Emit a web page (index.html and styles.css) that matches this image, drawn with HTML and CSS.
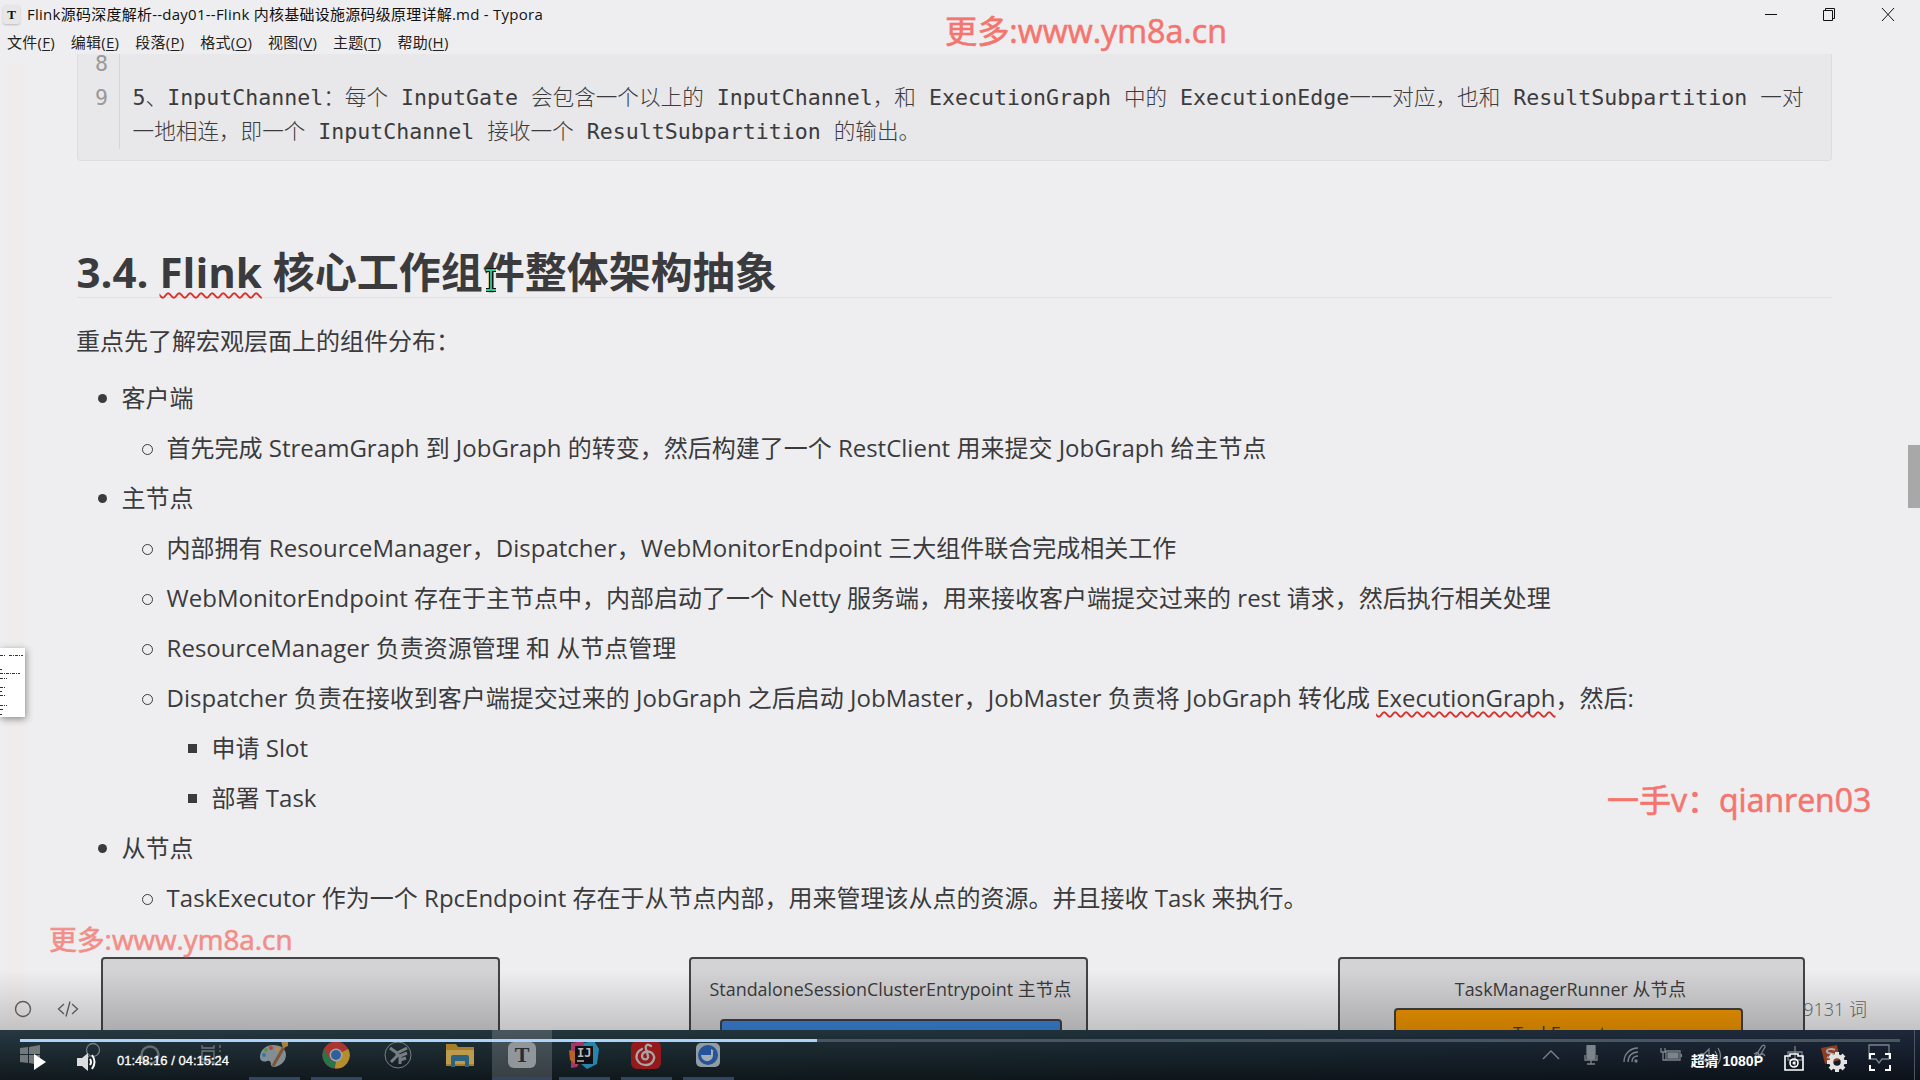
FILE: index.html
```
<!DOCTYPE html>
<html lang="zh-CN">
<head>
    <meta charset="UTF-8">
    <title>Flink源码深度解析--day01--Flink 内核基础设施源码级原理详解.md - Typora</title>
    <link rel="stylesheet" href="styles.css">
</head>
<body>
<div class="wrap">
    <!-- 标题栏 -->
    <div class="title-bar">
        <span class="logo">T</span>
        <span class="title">Flink源码深度解析--day01--Flink 内核基础设施源码级原理详解.md - Typora</span>
        <div class="win-btns">
            <svg width="12" height="16" viewBox="0 0 12 16"><path d="M0 8.5h12"/></svg>
            <svg width="14" height="16" viewBox="0 0 14 16"><path d="M1.5 4.5h9v10h-9zM3.5 4.5v-2h9v10h-2"/></svg>
            <svg width="14" height="16" viewBox="0 0 14 16"><path d="M1 2l12 13M13 2L1 15"/></svg>
        </div>
    </div>
    <ul class="menu">
        <li>文件(<u>F</u>)</li>
        <li>编辑(<u>E</u>)</li>
        <li>段落(<u>P</u>)</li>
        <li>格式(<u>O</u>)</li>
        <li>视图(<u>V</u>)</li>
        <li>主题(<u>T</u>)</li>
        <li>帮助(<u>H</u>)</li>
    </ul>

    <!-- 正文 -->
    <div class="content">
        <div class="code">
            <div class="line"><span class="num">8</span><p></p></div>
            <div class="line"><span class="num">9</span><p>5、InputChannel：每个 InputGate 会包含一个以上的 InputChannel，和 ExecutionGraph 中的 ExecutionEdge一一对应，也和 ResultSubpartition 一对<br>一地相连，即一个 InputChannel 接收一个 ResultSubpartition 的输出。</p></div>
        </div>
        <h2>3.4. <span class="err">Flink</span> 核心工作组件整体架构抽象</h2>
        <p class="intro">重点先了解宏观层面上的组件分布：</p>
        <ul class="list">
            <li>客户端
                <ul>
                    <li>首先完成 StreamGraph 到 JobGraph 的转变，然后构建了一个 RestClient 用来提交 JobGraph 给主节点</li>
                </ul>
            </li>
            <li>主节点
                <ul>
                    <li>内部拥有 ResourceManager，Dispatcher，WebMonitorEndpoint 三大组件联合完成相关工作</li>
                    <li>WebMonitorEndpoint 存在于主节点中，内部启动了一个 Netty 服务端，用来接收客户端提交过来的 rest 请求，然后执行相关处理</li>
                    <li>ResourceManager 负责资源管理 和 从节点管理</li>
                    <li>Dispatcher 负责在接收到客户端提交过来的 JobGraph 之后启动 JobMaster，JobMaster 负责将 JobGraph 转化成 <span class="err">ExecutionGraph</span>，然后:
                        <ul>
                            <li>申请 Slot</li>
                            <li>部署 Task</li>
                        </ul>
                    </li>
                </ul>
            </li>
            <li>从节点
                <ul>
                    <li>TaskExecutor 作为一个 RpcEndpoint 存在于从节点内部，用来管理该从点的资源。并且接收 Task 来执行。</li>
                </ul>
            </li>
        </ul>
        <div class="chart">
            <div class="box client"></div>
            <div class="box master"><span>StandaloneSessionClusterEntrypoint 主节点</span><div class="inner blue"></div></div>
            <div class="box worker"><span>TaskManagerRunner 从节点</span><div class="inner orange">TaskExecutor</div></div>
        </div>
    </div>

    <div class="scroll-thumb"></div>
    <div class="side-thumb">
        <svg width="25" height="69" viewBox="0 0 25 69"><path d="M0 7.5h5M9 7.5h14M0 21.5h2M0 25.5h20M0 30.5h7M0 39.5h5M0 43.5h2M0 47.5h5M0 57.5h7M0 61.5h3M0 66.5h2"/></svg>
    </div>
    <svg class="cursor" width="16" height="26" viewBox="0 0 16 26"><path class="edge" d="M3 3h4l1 1 1-1h4M8 4v18M3 23h4l1-1 1 1h4"/><path class="core" d="M3 3h4l1 1 1-1h4M8 4v18M3 23h4l1-1 1 1h4"/></svg>

    <!-- 底部状态 -->
    <div class="status">
        <svg width="18" height="18" viewBox="0 0 18 18"><circle cx="9" cy="9" r="7.5"/></svg>
        <svg width="22" height="18" viewBox="0 0 22 18"><path d="M7 4L1.5 9 7 14M15 4l5.500 5-5.500 5M13 1.500L9 16.500"/></svg>
        <span>9131 词</span>
    </div>

    <div class="mark mark-top">更多:www.ym8a.cn</div>
    <div class="mark mark-right">一手v：qianren03</div>
    <div class="mark mark-left">更多:www.ym8a.cn</div>

    <div class="shade"></div>

    <!-- 任务栏 -->
    <div class="taskbar">
        <div class="apps">
            <div class="app start"><svg width="20" height="20" viewBox="0 0 20 20"><path fill="#74797c" d="M0 3l8-1v7H0zM9 2l11-2v9H9zM0 10h8v8l-8-1zM9 10h11v10L9 18z"/></svg></div>
            <div class="app"><svg width="26" height="26" viewBox="0 0 26 26" fill="none" stroke="#777e82" stroke-width="1.300"><circle cx="18" cy="8" r="6.500"/><path d="M14 14l-7 9"/></svg></div>
            <div class="app"><svg width="22" height="22" viewBox="0 0 22 22"><circle cx="11" cy="11" r="8.500" fill="none" stroke="#626b70" stroke-width="2.500"/></svg></div>
            <div class="app"><svg width="22" height="22" viewBox="0 0 22 22" fill="none" stroke="#70777b" stroke-width="1.300"><path d="M1 1v3h12V1M1 7h12v8H1zM1 21v-3h12v3M19 1v3M19 6v2M19 11v10"/></svg></div>
            <div class="app open"><svg width="30" height="28" viewBox="0 0 30 28"><path fill="#818e96" d="M14 4C6 4 1 10 1 16c0 5 5 5 7 4 3-1 4 1 4 4 1 5 15 0 15-10 0-6-5-10-13-10z"/><circle cx="5" cy="14" r="2" fill="#347a9f"/><circle cx="7" cy="9" r="2" fill="#61943d"/><circle cx="12" cy="7" r="2" fill="#b84437"/><circle cx="18" cy="8" r="2" fill="#bd8c34"/><path d="M26 4L14 25" stroke="#84532f" stroke-width="3"/><path d="M22 0h7v5l-5 2z" fill="#a68047"/></svg></div>
            <div class="app open"><svg width="28" height="28" viewBox="0 0 28 28"><circle cx="14" cy="14" r="13.500" fill="#a93730"/><path fill="#b58d2c" d="M14 14l12.300-6A13.500 13.500 0 0 1 13 27.500z"/><path fill="#29744a" d="M2 8l6 10 6 3-2 6.500A13.500 13.500 0 0 1 2 8z"/><circle cx="14" cy="14" r="6.500" fill="#a2a9ad"/><circle cx="14" cy="14" r="5" fill="#315f9c"/></svg></div>
            <div class="app"><svg width="28" height="28" viewBox="0 0 28 28" fill="none" stroke="#777d80"><circle cx="14" cy="14" r="13"/><path stroke-width="3" d="M6 7l7 5 10-5M13 12v3l-6 6M16 13v10M16 15l7-3M16 19l6-2"/></svg></div>
            <div class="app"><svg width="28" height="24" viewBox="0 0 28 24"><path fill="#a77d28" d="M0 1h10l2 3h16v19H0z"/><path fill="#bd9b4c" d="M0 7h28v14H0z"/><path fill="#2d6380" d="M5 14q0-2 2-2h14q2 0 2 2v10h-4v-6H9v6H5z"/></svg></div>
            <div class="app open active"><span class="ty">T</span></div>
            <div class="app open"><svg width="30" height="28" viewBox="0 0 30 28"><path fill="#a53668" d="M2 2l12-2 4 8-10 18-6 1z"/><path fill="#b66425" d="M0 9l8 2v13l-7-5z"/><path fill="#2685ab" d="M15 2l10-2 5 8-2 15-10 5-7-6z"/><path fill="#100f13" d="M6 5h18v18H6z"/><path stroke="#b5b5b5" stroke-width="1.500" d="M8 20h7"/></svg><b class="ij">IJ</b></div>
            <div class="app open"><svg width="30" height="28" viewBox="0 0 30 28"><rect width="30" height="28" rx="6" fill="#95191b"/><path fill="none" stroke="#aaa3a3" stroke-width="2.300" stroke-linecap="round" d="M20 5c-4-3-6 0-5 3l2 7c1 4-6 5-6 0 0-4 6-6 10-3 5 5 0 12-6 12-7 0-11-6-9-11 1-3 3-4 5-5"/></svg></div>
            <div class="app open"><svg width="24" height="24" viewBox="0 0 24 24"><rect width="24" height="24" rx="5" fill="#929da3"/><circle cx="12" cy="12" r="10" fill="#245398"/><path fill="#a4adb5" d="M5 12h10V6l3 2h-1v5c-1 7-11 7-12-1z"/></svg></div>
        </div>
        <div class="tray">
            <svg width="18" height="12" viewBox="0 0 18 12"><path d="M1 10l8-8 8 8"/></svg>
            <svg width="14" height="20" viewBox="0 0 14 20"><rect x="3" y="0" width="8" height="14" rx="1" fill="#7b838b"/><path d="M1 10v5h12v-5M7 15v4M3 19h8"/></svg>
            <svg width="18" height="18" viewBox="0 0 18 18"><path d="M2 16C2 8 8 2 16 2M6 16c0-6 4-10 10-10M10 16c0-4 2-6 6-6"/><circle cx="14" cy="15" r="1"/></svg>
            <svg width="22" height="16" viewBox="0 0 22 16"><path d="M1 1v4h4V1M3 5v8h3M6 4h14v9H6zM21.500 7v3"/><path fill="#7b838b" d="M8 6h10v5H8z"/></svg>
        </div>
        <svg class="tray-vol" width="22" height="20" viewBox="0 0 22 20"><path d="M1 8v6h3l5 4V3L4 8zM12 8q2 3 0 6M15 5q4 6 0 11M18 2q5 8 0 16"/></svg>
        <svg class="tray-pen" width="16" height="20" viewBox="0 0 16 20"><path d="M2 14L10 2q3-2 3 1L6 15M2 10q6-4 4 2 5-4 7 0"/></svg>
        <svg class="tray-ime" width="18" height="22" viewBox="0 0 18 22"><path d="M9 0v21M2 6h14v8H2z"/></svg>
        <svg class="tray-sogou" width="20" height="19" viewBox="0 0 20 19"><path fill="#8e3c22" d="M0 3l16-3 3 15-15 4z"/><path fill="none" stroke="#aaa" stroke-width="2" d="M14 5c-3-2-9-1-8 2 1 2 8 1 8 4 0 2-5 3-8 1"/></svg>
        <svg class="tray-note" width="22" height="20" viewBox="0 0 22 20"><path d="M1 1h20v14h-7l-3 4-3-4H1z"/></svg>
        <i class="edge-line"></i>

        <!-- 播放器控制条 -->
        <div class="progress"><div class="played"></div></div>
        <div class="player">
            <svg class="play" width="12" height="16" viewBox="0 0 12 16"><path d="M0 0l12 8-12 8z"/></svg>
            <svg class="vol" width="20" height="18" viewBox="0 0 20 18"><path d="M0 5h5l6-5v18l-6-5H0z"/><path class="wave" d="M13 6q2 3 0 6M15 2q5 7 0 14"/></svg>
            <span class="time">01:48:16 / 04:15:24</span>
            <span class="quality">超清 1080P</span>
            <svg class="shot" width="20" height="18" viewBox="0 0 20 18"><path d="M6 3V1h8v2h5v14H1V3z"/><circle cx="10" cy="10" r="4"/><circle class="dot" cx="10" cy="10" r="1.500"/></svg>
            <svg class="gear" width="20" height="20" viewBox="0 0 20 20"><circle cx="10" cy="10" r="5.700"/><path d="M10 0v4M10 16v4M0 10h4M16 10h4M3 3l3 3M14 14l3 3M17 3l-3 3M6 14l-3 3"/></svg>
            <svg class="full" width="22" height="18" viewBox="0 0 22 18"><path d="M1 6V1h5M16 1h5v5M21 12v5h-5M6 17H1v-5"/></svg>
        </div>
    </div>
</div>
</body>
</html>
```
FILE: styles.css
```
body, h2, p, ul {
    margin: 0;
    padding: 0
}

body {
    font: 24px/38px "Open Sans", "Noto Sans CJK SC", sans-serif;
    color: #3b3b3d;
    background: #eeeef0;
    overflow: hidden;
}

ul {
    list-style: none
}

.wrap {
    width: 1920px;
    height: 1080px;
    position: relative;
    overflow: hidden;
    background: linear-gradient(#efedeb, #efedeb) 7px 64px / 17px 100% no-repeat;
}

/* 标题栏 */
.title-bar {
    display: flex;
    align-items: center;
    height: 29px;
    font: 15px/29px "Open Sans", "Noto Sans CJK SC", sans-serif;
    color: #111;
}

.logo {
    width: 17px;
    height: 19px;
    margin: 0 7px 0 3px;
    border-radius: 3px;
    background: #e7e7e8;
    box-shadow: 0 1px 2px #bbb;
    font: bold 13px/19px "Liberation Serif", serif;
    text-align: center;
}

.title {
    margin-top: -1px;
    letter-spacing: 0.25px;
}

.win-btns {
    display: flex;
    gap: 45px;
    margin: -2px 25px 0 auto;
}

.win-btns svg {
    fill: none;
    stroke: #111;
}

.menu {
    display: flex;
    gap: 16px;
    height: 25px;
    padding-left: 7px;
    font: 15px/26px "Open Sans", "Noto Sans CJK SC", sans-serif;
    color: #222;
}

.menu li {
    white-space: nowrap;
    letter-spacing: 0.24px;
}

.menu u {
    text-underline-offset: 2px;
}

/* 正文 */
.content {
    margin: 0 88px 0 77px;
}

.code {
    height: 107px;
    border: 1px solid #dcdddf;
    border-top: 0;
    border-radius: 0 0 4px 4px;
    background: #e8e7e9;
    font: 21.6px/34px "DejaVu Sans Mono", "Noto Sans CJK SC", monospace;
    box-sizing: border-box;
}

.line {
    display: flex;
    height: 34px;
}

/* 第一行只露出下半部分，行高收短 */
.line:first-child {
    height: 27px;
    line-height: 20px;
}

.line + .line {
    height: 68px;
}

.line p {
    border-left: 1px solid #d5d5d7;
    padding-left: 12.6px;
    white-space: nowrap;
    font-weight: 300;
}

.num {
    width: 30px;
    padding-right: 11px;
    text-align: right;
    color: #999;
}

h2 {
    height: 53px;
    margin-top: 83px;
    border-bottom: 1px solid #e0e0e2;
    font-size: 42px;
    line-height: 55px;
    text-indent: -0.4px;
}

.err {
    text-decoration: underline wavy #d8322c 1.5px;
    text-underline-offset: 4px;
    text-decoration-skip-ink: none;
}

.intro {
    margin-top: 24px;
    text-indent: -1px;
}

.list {
    margin-top: 13px;
    line-height: 50px;
    white-space: nowrap;
}

.list li {
    position: relative;
    padding-left: 45px;
    text-indent: -0.4px;
}

.list li::before {
    content: "";
    position: absolute;
    left: 21px;
    top: 21px;
    width: 9px;
    height: 9px;
    border-radius: 50%;
    background: #3b3b3d;
}

.list li li::before {
    left: 20px;
    border: 1px solid #3b3b3d;
    background: none;
}

.list li li li::before {
    left: 21px;
    border: 0;
    border-radius: 0;
    background: #3b3b3d;
}

.chart {
    display: flex;
    margin: 34px 0 0 24px;
    font: 17.9px/28px "Open Sans", "Noto Sans CJK SC", sans-serif;
}

.box {
    box-sizing: border-box;
    height: 100px;
    border: 2px solid #444;
    border-radius: 4px;
    background: #d3d3d5;
    text-align: center;
    padding-top: 16px;
    white-space: nowrap;
}

.client {
    width: 399px;
}

.master {
    width: 399px;
    margin-left: 189px;
}

.master span {
    padding-left: 4px;
}

.worker {
    width: 467px;
    margin-left: 250px;
}

.worker span {
    padding-right: 2px;
}

.inner {
    box-sizing: border-box;
    height: 70px;
    border: 2px solid #3d3f42;
    border-radius: 4px;
}

.blue {
    margin: 16px 24px 0 29px;
    background: #3b82d8;
}

.orange {
    margin: 5px 60px 0 54px;
    background: #ef9500;
    padding-top: 9px;
}

/* 悬浮元素 */
.scroll-thumb {
    position: absolute;
    right: 0;
    top: 445px;
    width: 12px;
    height: 63px;
    background: #a8a8a8;
}

.side-thumb {
    position: absolute;
    left: 0;
    top: 648px;
    width: 25px;
    height: 69px;
    background: #fff;
    box-shadow: 1px 2px 7px #888;
}

.side-thumb path {
    stroke: #333;
    stroke-dasharray: 3 1 1 1;
}

.cursor {
    position: absolute;
    left: 483px;
    top: 267px;
    fill: none;
}

.cursor .edge {
    stroke: #111;
    stroke-width: 4;
}

.cursor .core {
    stroke: #35c99b;
    stroke-width: 1.8;
}

.status {
    position: absolute;
    left: 14px;
    right: 53px;
    top: 995px;
    display: flex;
    align-items: center;
    gap: 25px;
    height: 28px;
    font: 18px/28px "Open Sans", "Noto Sans CJK SC", sans-serif;
    font-weight: 300;
    color: #666;
}

.status svg {
    fill: none;
    stroke: #666;
    stroke-width: 1.4;
}

.status span {
    margin-left: auto;
}

.mark {
    position: absolute;
    font: 32px/40px "Open Sans", "Noto Sans CJK SC", sans-serif;
    color: #f4756e;
    -webkit-text-stroke: 0.6px #f4756e;
    white-space: nowrap;
}

.mark-top {
    left: 945px;
    top: 11px;
    font-size: 32.2px;
}

.mark-right {
    left: 1607px;
    top: 780px;
}

.mark-left {
    left: 49px;
    top: 919px;
    font-size: 27.8px;
    opacity: 0.8;
}

.shade {
    position: absolute;
    left: 0;
    right: 0;
    top: 970px;
    height: 60px;
    background: linear-gradient(transparent, rgba(0, 0, 0, 0.18));
}

/* 任务栏 */
.taskbar {
    position: absolute;
    left: 0;
    right: 0;
    top: 1030px;
    height: 50px;
    background: linear-gradient(rgba(0, 0, 0, 0), rgba(0, 0, 0, 0.55)), linear-gradient(90deg, #263841, #20323a 50%, #1d283a);
}

.apps {
    display: flex;
    height: 50px;
}

.app {
    position: relative;
    display: flex;
    align-items: center;
    justify-content: center;
    width: 60px;
    margin-right: 2px;
    box-sizing: border-box;
}

.app.start {
    width: 56px;
    padding-left: 4px;
}

.app.open::after {
    content: "";
    position: absolute;
    left: 5px;
    right: 4px;
    bottom: 0;
    height: 3px;
    background: #34465f;
}

.app.active {
    background: rgba(255, 255, 255, 0.17);
}

.app.active::after {
    left: 0;
    right: 0;
}

.ty {
    width: 28px;
    height: 26px;
    border-radius: 6px;
    background: #91969b;
    color: #292d30;
    font: bold 22px/26px "Liberation Serif", serif;
    text-align: center;
}

.ij {
    position: absolute;
    left: 23px;
    top: 17px;
    color: #bbb;
    font: bold 12px/12px "DejaVu Sans Mono", monospace;
}

.tray {
    position: absolute;
    left: 1542px;
    top: 0;
    display: flex;
    align-items: center;
    height: 50px;
    gap: 24px;
}

.tray svg:last-child {
    margin-left: -4px;
}

.tray svg, .tray-vol, .tray-pen, .tray-ime, .tray-note {
    fill: none;
    stroke: #7b838b;
    stroke-width: 1.3;
}

.tray-vol, .tray-pen, .tray-ime, .tray-sogou, .tray-note {
    position: absolute;
    top: 16px;
}

.tray-vol {
    left: 1700px;
}

.tray-pen {
    left: 1752px;
    top: 14px;
}

.tray-ime {
    left: 1786px;
}

.tray-sogou {
    left: 1821px;
    top: 15px;
}

.tray-note {
    left: 1868px;
    top: 14px;
}

.edge-line {
    position: absolute;
    right: 5px;
    top: 0;
    width: 1px;
    height: 50px;
    background: #4c5663;
}

.progress {
    position: absolute;
    left: 20px;
    right: 20px;
    top: 9px;
    height: 3px;
    background: #4a5562;
}

.played {
    width: 797px;
    height: 3px;
    background: #aed3fb;
}

.player {
    position: absolute;
    left: 0;
    right: 20px;
    top: 20px;
    display: flex;
    align-items: center;
    height: 20px;
    padding: 2px 9px 0 34px;
    font: 13px/20px "Liberation Sans", "Noto Sans CJK SC", sans-serif;
    color: #fff;
}

.player svg {
    fill: #fff;
}

.player .vol {
    margin-left: 31px;
    fill: #ddd;
}

.player .wave, .player .shot, .player .full {
    fill: none;
    stroke: #fff;
    stroke-width: 2;
}

.time {
    margin: -3px 0 0 20px;
    -webkit-text-stroke: 0.3px #fff;
}

.quality {
    margin: -3px 0 0 auto;
    font-size: 14px;
    font-weight: bold;
}

.player .shot {
    margin-left: 21px;
    stroke-width: 1.6;
}

.player .dot {
    fill: #fff;
    stroke: none;
}

.player .gear {
    margin-left: 23px;
    fill: none;
    stroke: #e3e3e3;
    stroke-width: 4;
}

.player .full {
    margin-left: 22px;
}
```
